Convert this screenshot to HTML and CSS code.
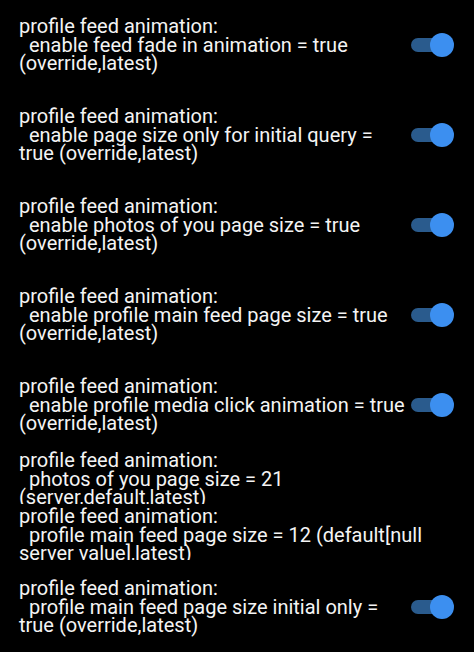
FILE: index.html
```html
<!DOCTYPE html>
<html lang="en">
<head>
  <meta charset="UTF-8" />
  <meta name="viewport" content="width=device-width, initial-scale=1.0" />
  <title>Profile feed flags</title>
  <link rel="stylesheet" href="styles.css">
</head>
<body>

  <!-- FLAG LIST -->
  <main class="flag-list">
    <div class="flag-row">
      <div class="flag-text">profile feed animation:
  enable feed fade in animation = true (override,latest)</div>
      <div class="switch on"><span class="thumb"></span></div>
    </div>
    <div class="flag-row">
      <div class="flag-text">profile feed animation:
  enable page size only for initial query = true (override,latest)</div>
      <div class="switch on"><span class="thumb"></span></div>
    </div>
    <div class="flag-row">
      <div class="flag-text">profile feed animation:
  enable photos of you page size = true (override,latest)</div>
      <div class="switch on"><span class="thumb"></span></div>
    </div>
    <div class="flag-row">
      <div class="flag-text">profile feed animation:
  enable profile main feed page size = true (override,latest)</div>
      <div class="switch on"><span class="thumb"></span></div>
    </div>
    <div class="flag-row">
      <div class="flag-text">profile feed animation:
  enable profile media click animation = true (override,latest)</div>
      <div class="switch on"><span class="thumb"></span></div>
    </div>
    <div class="flag-row compact">
      <div class="flag-text">profile feed animation:
  photos of you page size = 21 (server,default,latest)</div>
    </div>
    <div class="flag-row compact">
      <div class="flag-text">profile feed animation:
  profile main feed page size = 12 (default[null server value],latest)</div>
    </div>
    <div class="flag-row">
      <div class="flag-text">profile feed animation:
  profile main feed page size initial only = true (override,latest)</div>
      <div class="switch on"><span class="thumb"></span></div>
    </div>
  </main>

</body>
</html>
```

FILE: styles.css
```css
/* VARIABLES */
:root {
  --color-bg: #000;
  --color-text: #f4f4f4;
  --color-track: #2a5b8d;
  --color-thumb: #3c8ff0;
  --font-body: 'Roboto', sans-serif;
}

/* RESET */
*, *::before, *::after { box-sizing: border-box; margin: 0; padding: 0; }
body {
  font-family: var(--font-body);
  color: var(--color-text);
  background: var(--color-bg);
  overflow: hidden;
}

/* LIST */
.flag-list {
  display: flex;
  flex-direction: column;
}
.flag-row {
  height: 90px;
  display: flex;
  align-items: center;
  gap: 6px;
  padding: 0 20px 0 19px;
}
.flag-text {
  flex: 1;
  font-size: 20px;
  line-height: 18.5px;
  white-space: pre-wrap;
}
.flag-row.compact {
  height: 56px;
  align-items: flex-start;
  padding-top: 1px;
}
.flag-row.compact .flag-text {
  max-height: 53px;
  overflow: hidden;
}

/* SWITCH */
.switch {
  position: relative;
  width: 43px;
  height: 24px;
  flex-shrink: 0;
  display: flex;
  align-items: center;
}
.switch::before {
  content: "";
  width: 36px;
  height: 14px;
  border-radius: 7px;
  background: var(--color-track);
}
.switch .thumb {
  position: absolute;
  right: 0;
  top: 0;
  width: 24px;
  height: 24px;
  border-radius: 50%;
  background: var(--color-thumb);
}
```
